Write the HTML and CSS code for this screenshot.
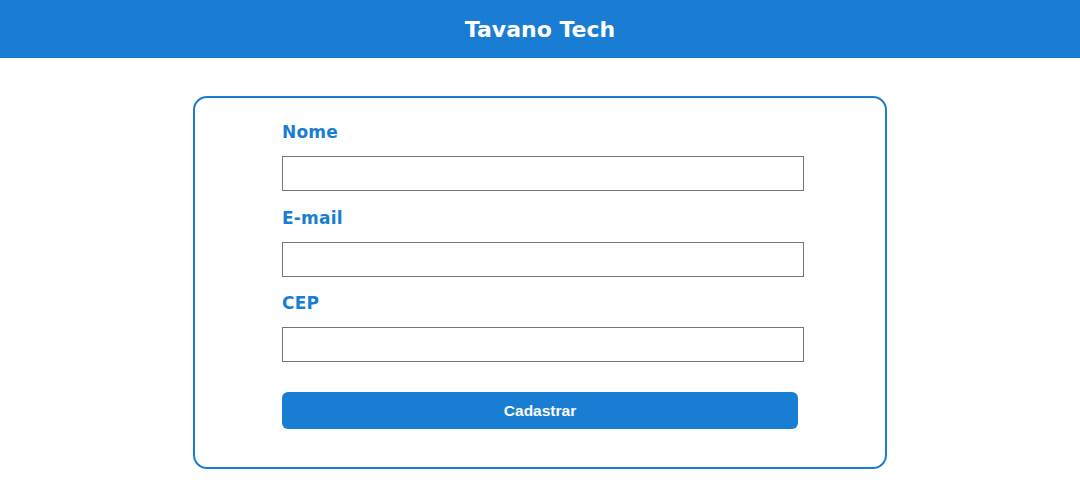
FILE: index.html
```html
<!DOCTYPE html>
<html lang="pt-BR">
<head>
<meta charset="utf-8">
<title>Tavano Tech</title>
<link rel="stylesheet" href="styles.css">
</head>
<body>
<header class="topbar">
  <h1 class="brand">Tavano Tech</h1>
</header>
<main class="page">
  <form class="card">
    <div class="field">
      <label class="label" for="nome">Nome</label>
      <input class="input" id="nome" type="text">
    </div>
    <div class="field">
      <label class="label" for="email">E-mail</label>
      <input class="input" id="email" type="email">
    </div>
    <div class="field">
      <label class="label" for="cep">CEP</label>
      <input class="input" id="cep" type="text">
    </div>
    <button class="submit" type="button">Cadastrar</button>
  </form>
</main>
</body>
</html>
```
FILE: styles.css
```css
* { box-sizing: border-box; }
html, body { margin: 0; padding: 0; background: #ffffff; }
body { font-family: "DejaVu Sans", "Liberation Sans", sans-serif; }

.topbar {
  height: 58px;
  background: #197ed3;
  display: flex;
  align-items: center;
  justify-content: center;
}
.brand {
  margin: 0;
  color: #ffffff;
  font-size: 22px;
  font-weight: 700;
  letter-spacing: 0;
}

.page {
  display: flex;
  justify-content: center;
  padding-top: 38px;
}
.card {
  width: 694px;
  border: 2px solid #197ed3;
  border-radius: 14px;
  padding: 24px 0 38px 87px;
  display: flex;
  flex-direction: column;
}
.field {
  display: flex;
  flex-direction: column;
  margin-bottom: 16.5px;
}
.label {
  color: #197ed3;
  font-size: 17px;
  line-height: 20px;
  font-weight: 700;
  letter-spacing: 0.2px;
  margin-bottom: 14px;
}
.input {
  width: 522px;
  height: 35px;
  border: 1px solid #767676;
  border-radius: 0;
  margin: 0;
  padding: 0 6px;
}
.submit {
  margin-top: 13.5px;
  width: 516px;
  height: 37px;
  border: none;
  border-radius: 6px;
  background: #197ed3;
  color: #ffffff;
  font-family: "Liberation Sans", Arial, sans-serif;
  font-size: 15.5px;
  font-weight: 700;
}
```
